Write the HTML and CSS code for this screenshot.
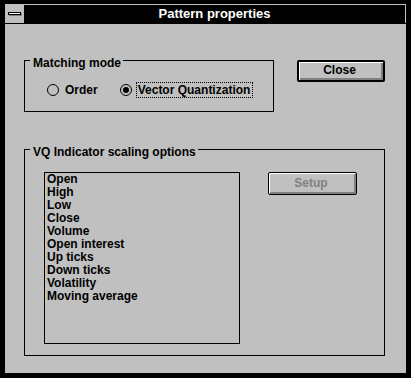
FILE: index.html
```html
<!DOCTYPE html>
<html>
<head>
<meta charset="utf-8">
<link rel="stylesheet" href="styles.css">
</head>
<body>
<div class="window">
  <div class="titlebar">
    <div class="sysmenu"><span class="sysbar"></span></div>
    <div class="caption">Pattern properties</div>
  </div>
  <div class="client">
    <div class="row1">
      <div class="group group1">
        <span class="glabel">Matching mode</span>
        <div class="radios">
          <div class="radio">
            <svg class="rbox" width="12" height="12" viewBox="0 0 12 12"><circle cx="6" cy="6" r="5.5" fill="none" stroke="#000" stroke-width="1"/></svg>
            <span class="rtext">Order</span>
          </div>
          <div class="radio radio2">
            <svg class="rbox" width="12" height="12" viewBox="0 0 12 12"><circle cx="6" cy="6" r="5.5" fill="none" stroke="#000" stroke-width="1"/><circle cx="6" cy="6" r="3" fill="#000"/></svg>
            <span class="rtext focus">Vector Quantization</span>
          </div>
        </div>
      </div>
      <div class="btn btn-default btn-close">Close</div>
    </div>
    <div class="group group2">
      <span class="glabel">VQ Indicator scaling options</span>
      <div class="row2">
        <div class="listbox">
          <div class="item">Open</div>
          <div class="item">High</div>
          <div class="item">Low</div>
          <div class="item">Close</div>
          <div class="item">Volume</div>
          <div class="item">Open interest</div>
          <div class="item">Up ticks</div>
          <div class="item">Down ticks</div>
          <div class="item">Volatility</div>
          <div class="item">Moving average</div>
        </div>
        <div class="btn btn-setup disabled">Setup</div>
      </div>
    </div>
  </div>
</div>
</body>
</html>
```
FILE: styles.css
```css
html, body {
  margin: 0;
  padding: 0;
  background: #000;
}
body {
  padding: 4px 0 0 5px;
  font-family: "Liberation Sans", Arial, sans-serif;
  font-weight: bold;
  font-size: 12px;
  color: #000;
}
.window {
  width: 401px;
}
.titlebar {
  display: flex;
  height: 20px;
  box-sizing: border-box;
  border-top: 1px solid #c0c0c0;
  border-bottom: 1px solid #000;
  background: #000;
}
.sysmenu {
  width: 19px;
  height: 18px;
  background: #c0c0c0;
  display: flex;
  padding: 7px 0 0 3px;
  box-sizing: border-box;
}
.sysbar {
  display: block;
  width: 11px;
  height: 1px;
  background: #fff;
  border: 1px solid #000;
  box-shadow: 1px 1px 0 #808080;
}
.caption {
  flex: 1;
  height: 18px;
  line-height: 18px;
  text-align: center;
  color: #fff;
  border-right: 1px solid #c0c0c0;
  font-size: 13px;
}
.client {
  background: #c0c0c0;
  height: 349px;
  box-sizing: border-box;
  padding: 36px 0 0 19px;
}
.row1 {
  display: flex;
  align-items: flex-start;
}
.group {
  position: relative;
  border: 1px solid #000;
  box-sizing: border-box;
}
.glabel {
  position: absolute;
  top: -4px;
  left: 5px;
  line-height: 12px;
  padding: 0 2px 0 3px;
  background: #c0c0c0;
  white-space: nowrap;
}
.group1 {
  width: 250px;
  height: 52px;
  padding: 21px 0 0 22px;
}
.radios {
  display: flex;
  height: 16px;
  align-items: center;
}
.radio {
  display: flex;
  align-items: center;
}
.radio2 {
  margin-left: 22px;
}
.rbox {
  display: block;
  flex: none;
}
.rtext {
  margin-left: 6px;
  line-height: 14px;
}
.radio2 .rtext {
  margin-left: 4px;
  padding: 0 2px 0 1px;
  border: 1px dotted #000;
}
.btn {
  box-sizing: border-box;
  border: 1px solid #000;
  border-radius: 2px;
  background: #c0c0c0;
  box-shadow: inset 1px 1px 0 #fff, inset -2px -2px 0 #808080;
  display: flex;
  align-items: center;
  justify-content: center;
}
.btn-default {
  border-width: 2px;
}
.btn-close {
  margin-left: 23px;
  width: 88px;
  height: 22px;
  padding: 0 3px 2px 0;
}
.group2 {
  margin-top: 37px;
  width: 361px;
  height: 207px;
  padding: 22px 0 0 19px;
}
.row2 {
  display: flex;
  align-items: flex-start;
}
.listbox {
  width: 196px;
  height: 172px;
  box-sizing: border-box;
  border: 1px solid #000;
  padding: 0 0 0 2px;
}
.item {
  line-height: 13px;
  white-space: nowrap;
}
.btn-setup {
  margin-left: 28px;
  width: 89px;
  height: 23px;
  padding: 0 3px 2px 0;
}
.disabled {
  color: #808080;
}
```
